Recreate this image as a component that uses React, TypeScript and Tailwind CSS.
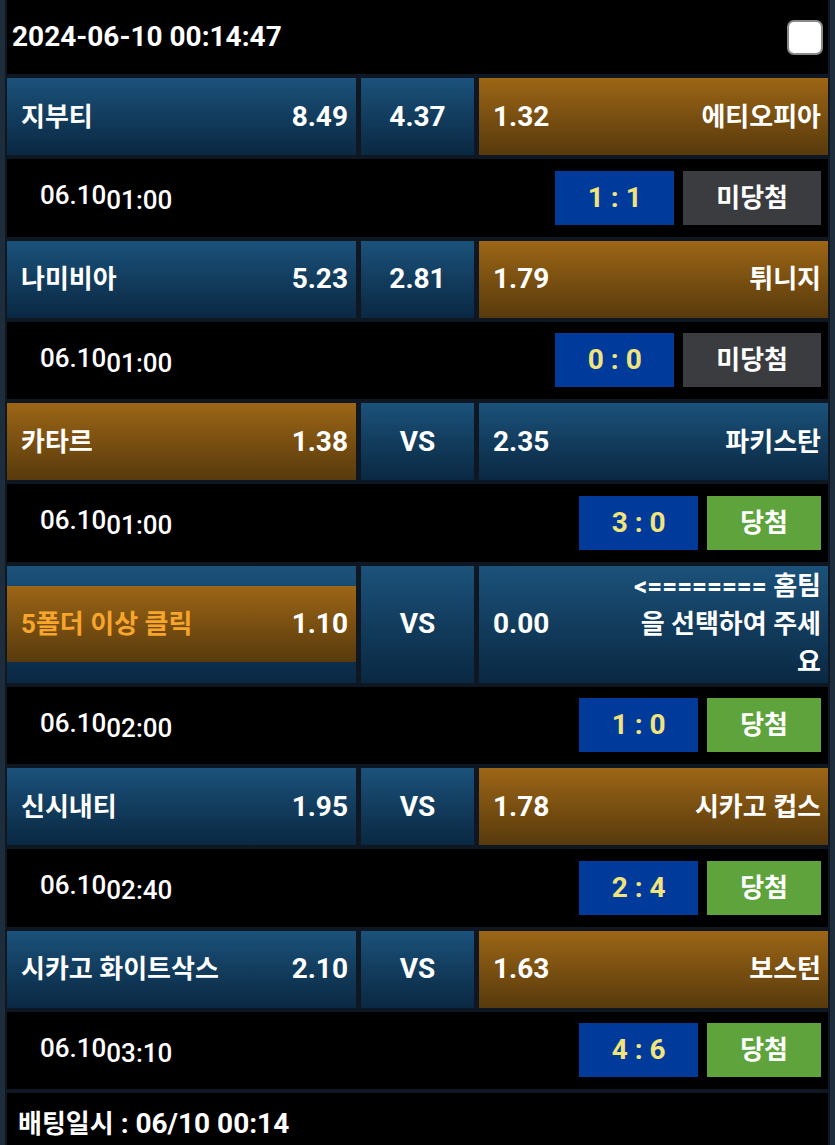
import React from "react";

type Match = {
  home: React.ReactNode;
  homeOrange?: boolean;
  h: string;
  d: string;
  a: string;
  away: React.ReactNode;
  sel: "home" | "away" | "none";
  date: string;
  time: string;
  score: string;
  status: string;
  tall?: boolean;
};

const matches: Match[] = [
  { home: "지부티", h: "8.49", d: "4.37", a: "1.32", away: "에티오피아", sel: "away", date: "06.10", time: "01:00", score: "1 : 1", status: "미당첨" },
  { home: "나미비아", h: "5.23", d: "2.81", a: "1.79", away: "튀니지", sel: "away", date: "06.10", time: "01:00", score: "0 : 0", status: "미당첨" },
  { home: "카타르", h: "1.38", d: "VS", a: "2.35", away: "파키스탄", sel: "home", date: "06.10", time: "01:00", score: "3 : 0", status: "당첨" },
  {
    home: "5폴더 이상 클릭",
    homeOrange: true,
    h: "1.10",
    d: "VS",
    a: "0.00",
    away: (
      <>
        {"<======== 홈팀"}
        <br />
        {"을 선택하여 주세"}
        <br />
        {"요"}
      </>
    ),
    sel: "home",
    date: "06.10",
    time: "02:00",
    score: "1 : 0",
    status: "당첨",
    tall: true,
  },
  { home: "신시내티", h: "1.95", d: "VS", a: "1.78", away: "시카고 컵스", sel: "away", date: "06.10", time: "02:40", score: "2 : 4", status: "당첨" },
  { home: "시카고 화이트삭스", h: "2.10", d: "VS", a: "1.63", away: "보스턴", sel: "away", date: "06.10", time: "03:10", score: "4 : 6", status: "당첨" },
];

const BLUE = "bg-linear-to-b from-[#1b527b] to-[#0a2842]";
const ORANGE = "bg-linear-to-b from-[#9d6616] to-[#583a0c]";

function Row({ m }: { m: Match }) {
  const homeCls = m.sel === "home" ? ORANGE : BLUE;
  const awayCls = m.sel === "away" ? ORANGE : BLUE;
  return (
    <>
      <div className={`grid grid-cols-[349px_113px_1fr] gap-x-[5px] ${m.tall ? "h-[117px]" : "h-[77px]"}`}>
        {m.tall ? (
          <div className={`${BLUE} flex items-center`}>
            <div className={`${ORANGE} h-[76px] w-full flex items-center justify-between pl-[14px] pr-[8px]`}>
              <span className="text-[#f7a52b]">{m.home}</span>
              <span className="text-[28px]">{m.h}</span>
            </div>
          </div>
        ) : (
          <div className={`${homeCls} flex items-center justify-between pl-[14px] pr-[8px]`}>
            <span className={m.homeOrange ? "text-[#f7a52b]" : ""}>{m.home}</span>
            <span className="text-[28px]">{m.h}</span>
          </div>
        )}
        <div className={`${BLUE} flex items-center justify-center text-[28px]`}>{m.d}</div>
        <div className={`${awayCls} flex items-center justify-between pl-[14px] pr-[7px]`}>
          <span className="text-[28px]">{m.a}</span>
          <span className="text-right leading-[38px]">{m.away}</span>
        </div>
      </div>
      <div className="h-[77.5px] bg-black flex items-center pl-[33px] pr-[7px]">
        <div className="font-medium">
          <span>{m.date}</span>
          <span className="align-[-5px]">{m.time}</span>
        </div>
        <div className="ml-auto flex items-center gap-[9px]">
          <div className="w-[119px] h-[54px] bg-[#003b9c] text-[#f2e47c] text-[28px] flex items-center justify-center">
            {m.score}
          </div>
          <div
            className={`h-[54px] px-[33px] flex items-center justify-center ${
              m.status === "당첨" ? "bg-[#5ea33c]" : "bg-[#3a3c3f]"
            }`}
          >
            {m.status}
          </div>
        </div>
      </div>
    </>
  );
}

export default function App() {
  return (
    <div
      className="min-h-screen bg-black text-white font-bold text-[26px] leading-none"
      style={{ fontFamily: 'Roboto, "Noto Sans CJK KR", sans-serif' }}
    >
      <div className="border-x-[5px] border-[#1e2d3c] bg-[#0f1822] px-[2px] flex flex-col gap-y-[4px]">
        <div className="h-[74px] bg-black flex items-center justify-between pl-[5px] pr-[5px]">
          <span className="text-[28px]">2024-06-10 00:14:47</span>
          <div className="w-[36px] h-[35px] rounded-[7px] bg-white border-2 border-[#8a8a8a]" />
        </div>
        {matches.map((m, i) => (
          <Row key={i} m={m} />
        ))}
        <div className="h-[62px] bg-black flex items-center pl-[11px]">
          <span>배팅일시</span>
          <span className="text-[28px]">&nbsp;: 06/10 00:14</span>
        </div>
      </div>
    </div>
  );
}
